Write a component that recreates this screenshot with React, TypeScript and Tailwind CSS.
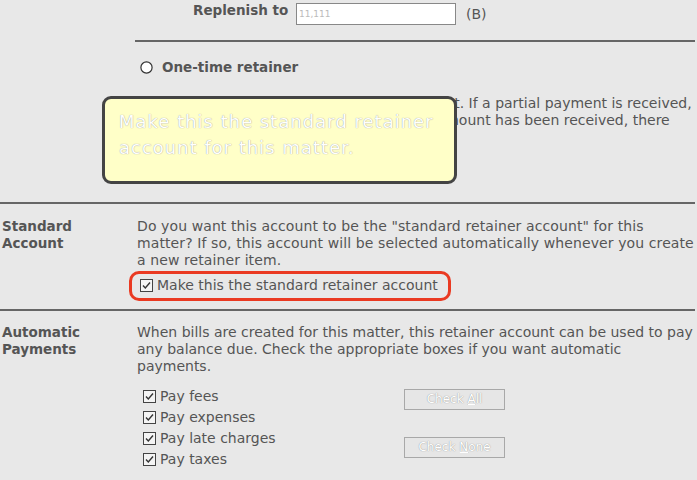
import React from 'react';

const font = { fontFamily: '"DejaVu Sans", Verdana, sans-serif' };

function Check() {
  return (
    <svg width="13" height="13" viewBox="0 0 13 13" className="shrink-0">
      <rect x="0.5" y="0.5" width="12" height="12" fill="#f4f4f4" stroke="#444" />
      <path d="M3 6.5 L5.3 9 L10 3.5" fill="none" stroke="#333" strokeWidth="1.4" />
    </svg>
  );
}

function Radio() {
  return (
    <svg width="13" height="13" viewBox="0 0 13 13" className="shrink-0">
      <circle cx="6.5" cy="6.5" r="5.6" fill="#fff" stroke="#333" strokeWidth="1.2" />
    </svg>
  );
}

function Btn({ pre, key1, post }: { pre: string; key1: string; post: string }) {
  return (
    <button className="w-[101px] h-[21px] border border-[#a8a8a8] bg-[#e6e6e6] text-[12px] text-white [text-shadow:0_0_1px_#777]">
      {pre}
      <span className="underline">{key1}</span>
      {post}
    </button>
  );
}

export default function App() {
  const pays = ['Pay fees', 'Pay expenses', 'Pay late charges', 'Pay taxes'];
  return (
    <div
      className="relative w-[697px] h-[480px] overflow-hidden bg-[#e8e8e8] text-[14px] leading-[17px] text-[#555]"
      style={font}
    >
      {/* upper section, recurring / one-time retainer */}
      <div className="pl-[135px] pr-[2px]">
        <div className="flex items-start h-[30px] pt-[3px]">
          <span className="ml-[58px] mt-[-1px] w-[103px] text-[13.5px] font-bold">Replenish to</span>
          <input
            readOnly
            value="11,111"
            className="w-[160px] h-[22px] border border-[#888] bg-white px-[2px] text-[9px] text-[#bbb] outline-none"
          />
          <span className="ml-[10px] mt-[3px]">(B)</span>
        </div>
        <div className="mt-[10px] border-t-2 border-[#666]" />
        <div className="flex items-center gap-[9px] mt-[17px] pl-[5px] text-[13.5px] font-bold">
          <Radio />
          <span>One-time retainer</span>
        </div>
        <div className="mt-[19px] pl-px whitespace-nowrap">
          Enter the amount the client must pay up front. If a partial payment is received,
          <br />
          the balance will be requested until the full amount has been received, there
          <br />
          will be no more requests.
        </div>
        <div className="flex mt-[6px] h-[23px]">
          <input readOnly className="ml-[161px] w-[160px] h-[23px] border border-[#888] bg-white outline-none" />
        </div>
      </div>

      <div className="mt-[27px] border-t-2 border-[#666] mr-[2px]" />

      {/* standard account */}
      <div className="grid grid-cols-[135px_1fr] pt-[14px] pl-[2px]">
        <div className="text-[13.5px] font-bold">
          Standard
          <br />
          Account
        </div>
        <div className="pr-[2px]">
          <p className="tracking-[0.1px]">
            Do you want this account to be the "standard retainer account" for this matter? If so, this account will
            be selected automatically whenever you create a new retainer item.
          </p>
          <div className="relative flex items-center gap-[4px] mt-[8px] pl-[3px] h-[17px]">
            <Check />
            <span>Make this the standard retainer account</span>
            <div className="absolute left-[-8px] top-[-6px] w-[322px] h-[30px] rounded-[10px] border-[3px] border-[#ea3a22]" />
          </div>
        </div>
      </div>

      <div className="mt-[15px] border-t-2 border-[#666] mr-[2px]" />

      {/* automatic payments */}
      <div className="grid grid-cols-[135px_1fr] pt-[13px] pl-[2px]">
        <div className="text-[13.5px] font-bold">
          Automatic
          <br />
          Payments
        </div>
        <div>
          <p>
            When bills are created for this matter, this retainer account can be used to pay any balance due. Check the
            appropriate boxes if you want automatic payments.
          </p>
          <div className="flex mt-[11px] pl-[6px]">
            <div className="flex flex-col w-[261px]">
              {pays.map((p) => (
                <div key={p} className="flex items-center gap-[4px] h-[21px]">
                  <Check />
                  <span>{p}</span>
                </div>
              ))}
            </div>
            <div className="flex flex-col gap-[27px] pt-[3px]">
              <Btn pre="Check " key1="A" post="ll" />
              <Btn pre="Check " key1="N" post="one" />
            </div>
          </div>
        </div>
      </div>

      {/* tooltip */}
      <div className="absolute left-[102px] top-[96px] w-[355px] h-[88px] rounded-[9px] border-[3px] border-[#444] bg-[#ffffc8] pl-[14px] pt-[10px] text-[18px] leading-[26px] tracking-[1px] text-white [text-shadow:0_0_1px_#888]">
        Make this the standard retainer
        <br />
        account for this matter.
      </div>
    </div>
  );
}
